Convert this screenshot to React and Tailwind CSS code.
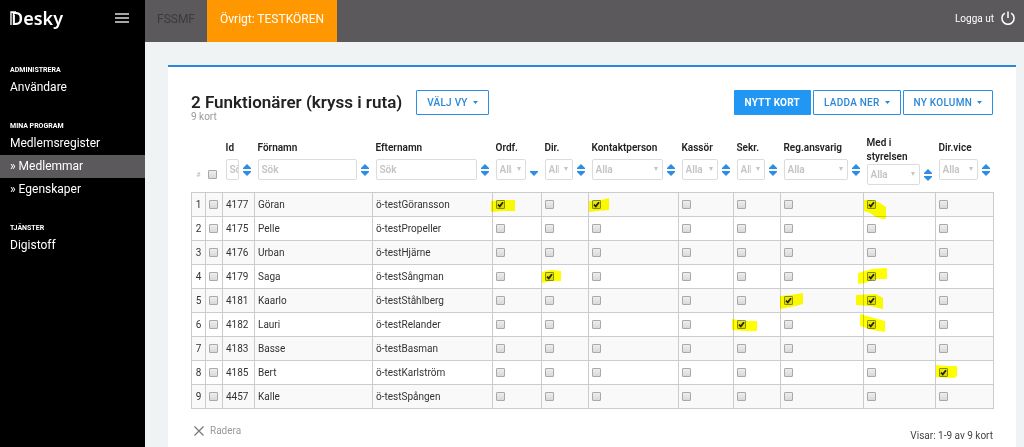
const columns = [
  { key: 'id', label: 'Id', type: 'text', width: 32 },
  { key: 'first', label: 'Förnamn', type: 'text', width: 118 },
  { key: 'last', label: 'Efternamn', type: 'text', width: 120 },
  { key: 'ordf', label: 'Ordf.', type: 'check', width: 49, sorted: true },
  { key: 'dir', label: 'Dir.', type: 'check', width: 47 },
  { key: 'kontakt', label: 'Kontaktperson', type: 'check', width: 90 },
  { key: 'kassor', label: 'Kassör', type: 'check', width: 55 },
  { key: 'sekr', label: 'Sekr.', type: 'check', width: 47 },
  { key: 'reg', label: 'Reg.ansvarig', type: 'check', width: 83 },
  { key: 'styrelsen', label: 'Med i styrelsen', type: 'check', width: 72 },
  { key: 'vice', label: 'Dir.vice', type: 'check', width: 58 },
]

// A checked role holds the outline of its marker stroke, relative to the cell
const rows = [
  {
    id: '4177',
    first: 'Göran',
    last: 'ö-testGöransson',
    ordf: '-2,8 10,7 22,7 22,18 10,18 -2,19',
    kontakt: '0,8 12,7 20,5 20,17 8,18 0,19',
    styrelsen: '0,7 8,7 16,10 22,14 22,26 18,26 12,24 6,20 0,18',
  },
  { id: '4175', first: 'Pelle', last: 'ö-testPropeller' },
  { id: '4176', first: 'Urban', last: 'ö-testHjärne' },
  {
    id: '4179',
    first: 'Saga',
    last: 'ö-testSångman',
    dir: '0,7 9,5 19,6 19,16 10,16 0,18',
    styrelsen: '-6,8 8,4 23,3 23,14 12,14 0,18 -6,19',
  },
  {
    id: '4181',
    first: 'Kaarlo',
    last: 'ö-testStåhlberg',
    reg: '-1,7 10,6 22,4 22,15 10,18 -1,20',
    styrelsen: '-8,6 12,5 19,9 19,20 6,17 -8,16',
  },
  {
    id: '4182',
    first: 'Lauri',
    last: 'ö-testRelander',
    sekr: '-2,6 8,8 23,8 23,18 10,18 -2,17',
    styrelsen: '-4,1 10,5 21,8 21,19 8,17 -4,13',
  },
  { id: '4183', first: 'Basse', last: 'ö-testBasman' },
  { id: '4185', first: 'Bert', last: 'ö-testKarlström', vice: '0,4 10,5 21,5 21,15 18,17 0,16' },
  { id: '4457', first: 'Kalle', last: 'ö-testSpången' },
]

function Checkbox({ label, checked = false }) {
  return (
    <span className="relative block w-[9px] h-[9px]">
      <input
        type="checkbox"
        aria-label={label}
        defaultChecked={checked}
        className="peer block appearance-none w-[9px] h-[9px] rounded-[1px] border border-[#a9a9a9] bg-linear-to-b from-[#eeeeee] to-[#d9d9d9] checked:border-[#8b8b8b]"
      />
      <svg className="absolute inset-0 w-[9px] h-[9px] pointer-events-none hidden peer-checked:block" viewBox="0 0 9 9" fill="none" stroke="#222" strokeWidth="1.8">
        <path d="M2 4.6L3.8 6.3L7 2.3" />
      </svg>
    </span>
  )
}

function SortIcon({ sorted }) {
  return (
    <svg className="w-2 h-3 shrink-0" viewBox="0 0 8 12" fill="#2b8de6">
      {!sorted && <path d="M4 0L8 4V5H0V4z" />}
      <path d="M0 7H8V8L4 12L0 8z" />
    </svg>
  )
}

function Caret() {
  return (
    <svg className="w-[5px] h-[3px]" viewBox="0 0 5 3" fill="currentColor">
      <path d="M0 0H5L2.5 3z" />
    </svg>
  )
}

function Filter({ column }) {
  if (column.type === 'text') {
    return (
      <input
        type="text"
        placeholder="Sök"
        aria-label={`Sök ${column.label}`}
        className="min-w-0 flex-1 h-[21px] pl-[3px] border border-[#dcdcdc] rounded-xs bg-white text-[10px] placeholder:text-[#c4c4c4]"
      />
    )
  }
  return (
    <span className="relative min-w-0 flex-1 text-[#c4c4c4]">
      <select
        aria-label={`Filtrera ${column.label}`}
        className="block w-full h-[21px] pl-[3px] pr-[13px] appearance-none border border-[#dcdcdc] rounded-xs bg-white text-[10px]"
      >
        <option>Alla</option>
      </select>
      <svg className="absolute right-[5px] top-[8px] w-[4px] h-[4px] pointer-events-none" viewBox="0 0 4 4" fill="currentColor">
        <path d="M0 0H4L2 4z" />
      </svg>
    </span>
  )
}

function OutlineButton({ children }) {
  return (
    <button className="flex items-center gap-[5px] h-[25px] px-[10px] border border-[#2b8fe6] rounded-[1px] bg-white text-[#2b87d8] text-[10px] font-medium tracking-wide uppercase whitespace-nowrap">
      {children}
      <Caret />
    </button>
  )
}

function MenuSection({ title, children }) {
  return (
    <div className="mb-[22px]">
      <h2 className="px-[10px] pb-px text-[7px] leading-[10px] font-bold uppercase">{title}</h2>
      <ul>{children}</ul>
    </div>
  )
}

function MenuItem({ active, children }) {
  return (
    <li>
      <a href="#" className={`block px-[10px] text-[12px] leading-[23px] ${active ? 'bg-[#5c595c]' : ''}`}>
        {children}
      </a>
    </li>
  )
}

function Sidebar() {
  return (
    <aside className="w-[145px] shrink-0 bg-black text-white">
      <div className="flex items-center justify-between h-[65px] pl-[10px] pr-[16px] pb-[29px]">
        <a href="#" className="relative font-['Noto_Sans',sans-serif] text-[18px] leading-[24px] font-semibold">
          Desky
          <svg className="absolute left-0 top-[5px] w-[6px] h-[14px]" viewBox="0 0 6 14" fill="none">
            <path d="M1 14V1H6" stroke="#fff" strokeWidth="1.4" />
            <path d="M2.3 2.2V14" stroke="#000" strokeWidth="1" />
            <path d="M4 3.5V14" stroke="#fff" strokeWidth="1.8" />
          </svg>
        </a>
        <button aria-label="Meny">
          <svg className="w-[14px] h-[10px]" viewBox="0 0 14 10" stroke="#ddd" strokeWidth="1.4">
            <path d="M0 1H14M0 5H14M0 9H14" />
          </svg>
        </button>
      </div>
      <nav>
        <MenuSection title="Administrera">
          <MenuItem>Användare</MenuItem>
        </MenuSection>
        <MenuSection title="Mina program">
          <MenuItem>Medlemsregister</MenuItem>
          <MenuItem active>» Medlemmar</MenuItem>
          <MenuItem>» Egenskaper</MenuItem>
        </MenuSection>
        <MenuSection title="Tjänster">
          <MenuItem>Digistoff</MenuItem>
        </MenuSection>
      </nav>
    </aside>
  )
}

function TopBar() {
  return (
    <header className="flex justify-between h-[42px] bg-[#5c595c]">
      <nav className="flex text-[12px] leading-[39px]">
        <a href="#" className="px-[12px] text-[#3b393b]">FSSMF</a>
        <a href="#" className="px-[13px] bg-[#ff9800] text-white">Övrigt: TESTKÖREN</a>
      </nav>
      <a href="#" className="flex items-center gap-[7px] pr-[9px] pb-[6px] text-white text-[10px]">
        Logga ut
        <svg className="w-[14px] h-[14px]" viewBox="0 0 14 14" fill="none" stroke="currentColor" strokeWidth="1.5">
          <path d="M7 0.5V7M3.8 2.2A6 6 0 1 0 10.2 2.2" />
        </svg>
      </a>
    </header>
  )
}

function MemberTable() {
  return (
    <table className="w-full table-fixed border-collapse text-[10px] text-[#333]">
      <colgroup>
        <col className="w-[14px]" />
        <col className="w-[17px]" />
        {columns.map((column) => (
          <col key={column.key} style={{ width: column.width }} />
        ))}
      </colgroup>
      <thead>
        <tr className="h-[63px]">
          <th className="align-bottom pb-[12px] text-[7px] leading-[10px] font-normal text-[#bbb]">#</th>
          <th className="align-bottom pl-[2px] pb-[13px]">
            <Checkbox label="Markera alla" />
          </th>
          {columns.map((column) => (
            <th key={column.key} className="align-middle pt-px pl-[3px] pr-[4px] text-left font-semibold leading-[14px] text-[#222]">
              <div className="min-h-[18px] pr-2">{column.label}</div>
              <div className="flex items-center gap-[4px]">
                <Filter column={column} />
                <SortIcon sorted={column.sorted} />
              </div>
            </th>
          ))}
        </tr>
      </thead>
      <tbody>
        {rows.map((row, i) => (
          <tr key={row.id} className="h-[24px] odd:bg-[#f9f9f9]">
            <td className="border border-[#ccc] text-center">{i + 1}</td>
            <td className="border border-[#ccc] pl-[3px]">
              <Checkbox label={`Markera ${row.first}`} />
            </td>
            {columns.map((column) =>
              column.type === 'text' ? (
                <td key={column.key} className="border border-[#ccc] pl-[3px] whitespace-nowrap">{row[column.key]}</td>
              ) : (
                <td key={column.key} className="relative border border-[#ccc] pl-[3px]">
                  <Checkbox label={`${column.label} ${row.first}`} checked={Boolean(row[column.key])} />
                  {row[column.key] && (
                    <svg className="absolute left-0 top-0 w-[24px] h-[24px] overflow-visible mix-blend-multiply pointer-events-none" viewBox="0 0 24 24" fill="#ffff00">
                      <polygon points={row[column.key]} />
                    </svg>
                  )}
                </td>
              )
            )}
          </tr>
        ))}
      </tbody>
    </table>
  )
}

function App() {
  return (
    <div className="flex min-h-screen bg-[#eff3f4] font-[Roboto,sans-serif]">
      <Sidebar />
      <div className="flex-1 min-w-0 flex flex-col">
        <TopBar />
        <main className="flex-1 mt-[23px] ml-[23px] mr-[8px] px-[23px] border-t-2 border-[#2b87dd] bg-white">
          <div className="flex justify-between items-start pt-[23px]">
            <div className="flex items-start gap-[14px]">
              <div>
                <h1 className="text-[17px] leading-[24px] font-semibold text-[#222]">2 Funktionärer (kryss i ruta)</h1>
                <p className="text-[10px] leading-[6px] text-[#999]">9 kort</p>
              </div>
              <OutlineButton>Välj vy</OutlineButton>
            </div>
            <div className="flex gap-[2px]">
              <button className="h-[25px] px-[11px] rounded-[1px] bg-[#2196f3] text-white text-[10px] font-bold tracking-wide uppercase">Nytt kort</button>
              <OutlineButton>Ladda ner</OutlineButton>
              <OutlineButton>Ny kolumn</OutlineButton>
            </div>
          </div>
          <div className="mt-[9px]">
            <MemberTable />
          </div>
          <div className="flex justify-between pt-[14px] text-[10px] leading-[16px]">
            <button className="flex items-center gap-[6px] h-[16px] pl-[3px] text-[#999]">
              <svg className="w-[10px] h-[10px]" viewBox="0 0 10 10" stroke="#777" strokeWidth="1.2">
                <path d="M0.5 0.5L9.5 9.5M9.5 0.5L0.5 9.5" />
              </svg>
              Radera
            </button>
            <p className="pt-[5px] text-[#444]">Visar: 1-9 av 9 kort</p>
          </div>
        </main>
      </div>
    </div>
  )
}

export default App
